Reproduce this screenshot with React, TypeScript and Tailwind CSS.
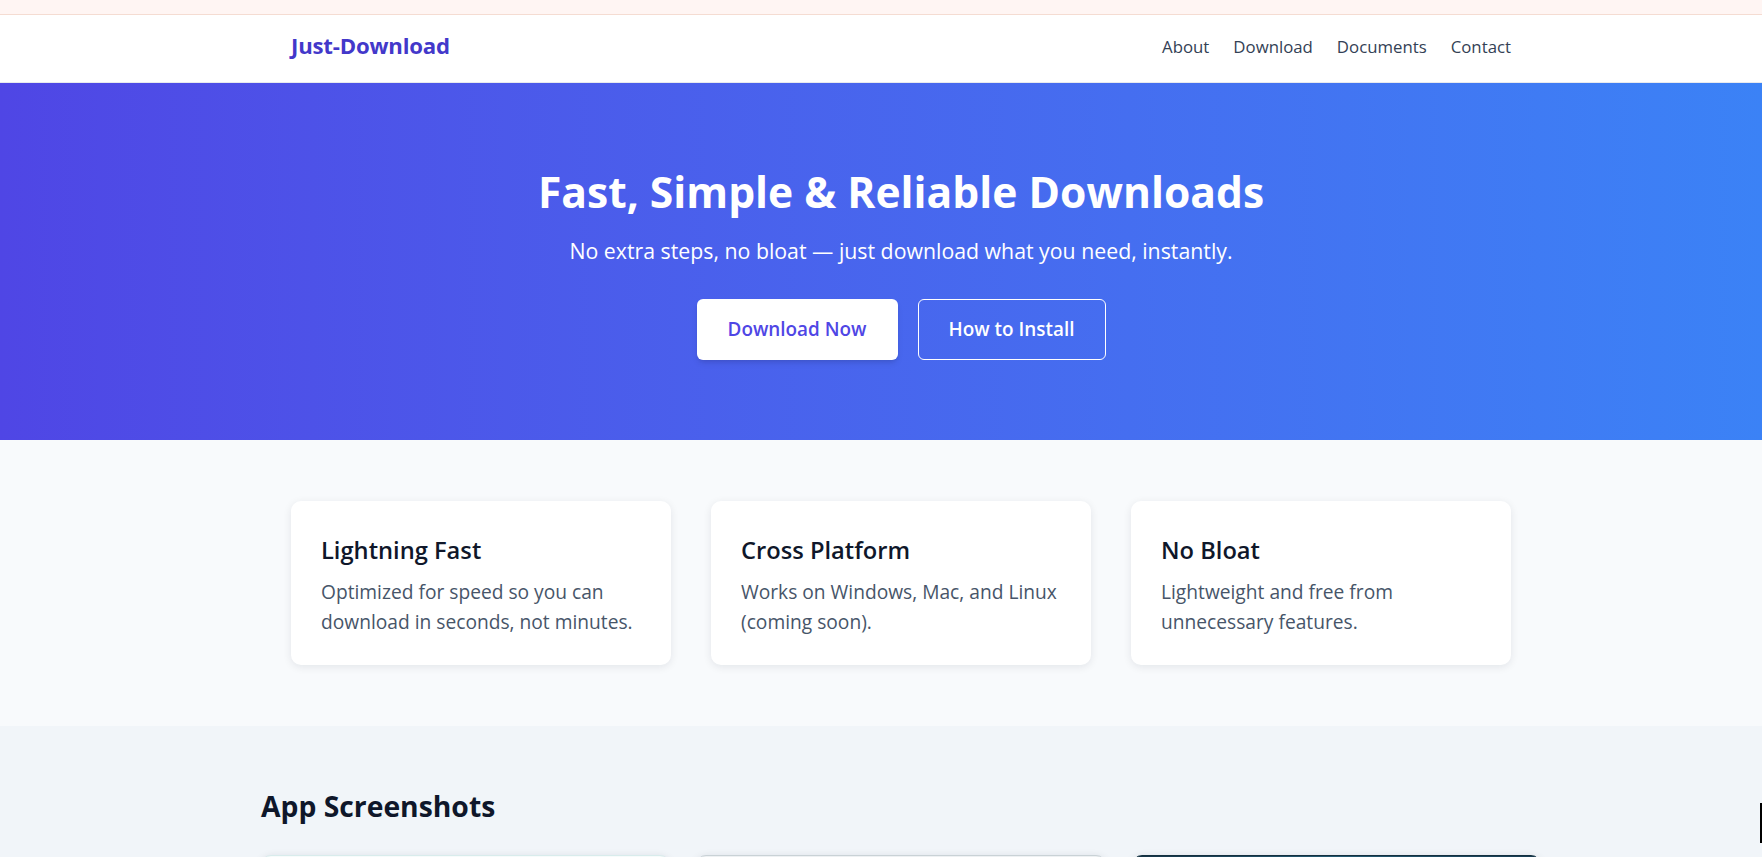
import { clsx } from "clsx"

const features = [
  {
    title: "Lightning Fast",
    text: "Optimized for speed so you can download in seconds, not minutes.",
  },
  {
    title: "Cross Platform",
    text: "Works on Windows, Mac, and Linux (coming soon).",
  },
  {
    title: "No Bloat",
    text: "Lightweight and free from unnecessary features.",
  },
]

const navLinks = ["About", "Download", "Documents", "Contact"]

function Header() {
  return (
    <header className="h-[68px] bg-white border-b border-[#e8eaee]">
      <div className="pl-10 h-full">
        <div className="mx-auto max-w-[1220px] h-full flex items-center justify-between pb-[6px]">
          <a className="text-[22.2px] font-bold text-[#4338ca] tracking-[-0.2px]">Just-Download</a>
          <nav className="flex items-center gap-6 mt-[2px]">
            {navLinks.map((link) => (
              <a key={link} className="text-[16.8px] text-[#334155]">
                {link}
              </a>
            ))}
          </nav>
        </div>
      </div>
    </header>
  )
}

function Hero() {
  return (
    <section className="bg-linear-to-r from-[#4f46e5] to-[#3b82f6] text-white pl-10 pt-[86px] pb-[80px]">
      <div className="flex flex-col items-center text-center">
        <h1 className="text-[42.6px] leading-[44px] font-bold">Fast, Simple &amp; Reliable Downloads</h1>
        <p className="mt-[24px] text-[21.3px] leading-[28.5px]">
          No extra steps, no bloat — just download what you need, instantly.
        </p>
        <div className="mt-[33px] flex gap-5">
          <button className="h-[61px] w-[201px] rounded-md bg-white text-[#4f46e5] text-[18.9px] font-semibold shadow-md">
            Download Now
          </button>
          <button className="h-[61px] w-[188px] rounded-md border border-white text-white text-[18.9px] font-semibold">
            How to Install
          </button>
        </div>
      </div>
    </section>
  )
}

function Features() {
  return (
    <section className="bg-[#f8fafc] pl-10 py-[61px]">
      <div className="mx-auto max-w-[1220px] grid grid-cols-3 gap-10">
        {features.map((f) => (
          <div
            key={f.title}
            className="bg-white rounded-[10px] shadow-[0_2px_8px_rgba(15,23,42,0.09)] px-[30px] pt-[34px] pb-[27px]"
          >
            <h3 className="text-[23.7px] leading-[30px] font-semibold text-[#0f172a]">{f.title}</h3>
            <p className="mt-3 text-[19.2px] leading-[30.5px] text-[#475569]">{f.text}</p>
          </div>
        ))}
      </div>
    </section>
  )
}

function Screenshots() {
  const shots = [
    "bg-[#f7fbfb] border-[#d8ecec]",
    "bg-[#eef1f3] border-[#c9d2d6]",
    "bg-linear-to-r from-[#163447] via-[#245a72] to-[#183c52] border-[#14303f]",
  ]
  return (
    <section className="bg-[#f1f5f9] pl-10 pt-[63px] pb-16">
      <div className="mx-auto max-w-[1280px]">
        <h2 className="text-[28.3px] leading-[35px] font-bold text-[#0f172a]">App Screenshots</h2>
        <div className="mt-[31px] grid grid-cols-3 gap-[26px]">
          {shots.map((cls, i) => (
            <div
              key={i}
              className={clsx("h-[240px] rounded-[10px] border shadow-[0_2px_8px_rgba(15,23,42,0.12)]", cls)}
            />
          ))}
        </div>
      </div>
    </section>
  )
}

export default function App() {
  return (
    <div className="relative min-h-screen bg-white font-['Open_Sans','Noto_Sans',sans-serif]">
      <div className="h-[15px] bg-[#fff5f3] border-b border-[#f5dcd2]" />
      <Header />
      <Hero />
      <Features />
      <Screenshots />
      <div className="absolute right-0 top-[803px] w-[2px] h-[40px] bg-black" />
    </div>
  )
}
